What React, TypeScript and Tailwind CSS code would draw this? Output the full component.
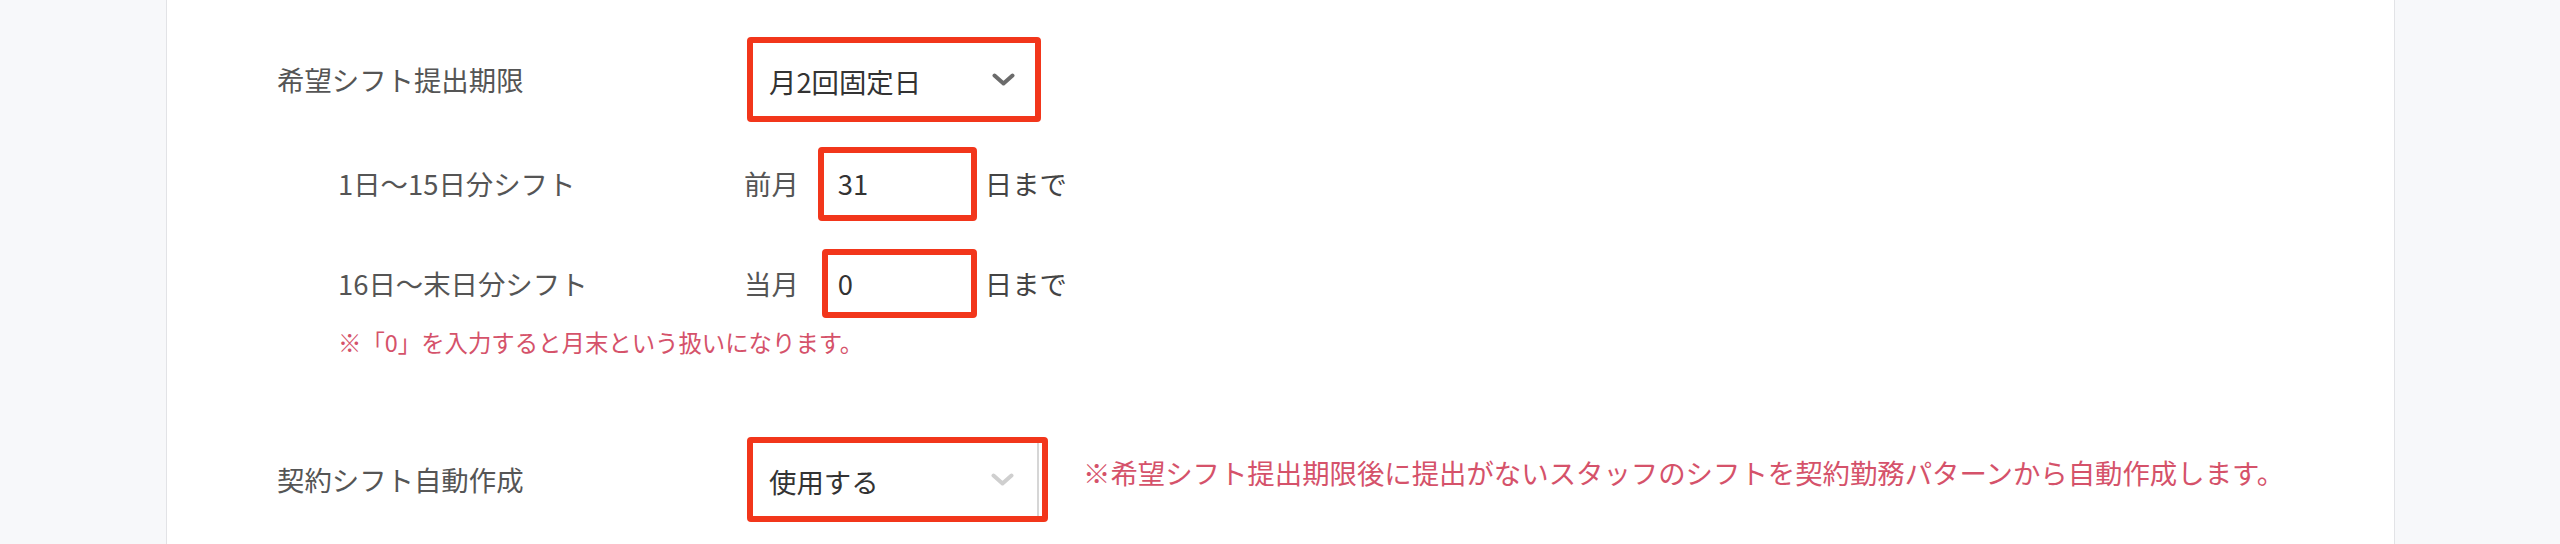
import React from "react";

function Chevron({ light }: { light?: boolean }) {
  return (
    <svg width="23" height="13" viewBox="0 0 23 13" className="shrink-0">
      <path
        d="M2.5 2.5 L11.5 10.5 L20.5 2.5"
        fill="none"
        stroke={light ? "#cfcfcf" : "#6b6b6b"}
        strokeWidth="4"
        strokeLinecap="round"
        strokeLinejoin="round"
      />
    </svg>
  );
}

function Label({ children, sub }: { children: React.ReactNode; sub?: boolean }) {
  return (
    <div className={`w-[467px] shrink-0 text-[27.4px] text-[#555] ${sub ? "pl-[61px]" : ""}`}>
      {children}
    </div>
  );
}

function DayInput({ prefix, value, offset }: { prefix: string; value: string; offset: "a" | "b" }) {
  return (
    <div className="flex items-center text-[27.4px]">
      <span className="text-[#555]">{prefix}</span>
      {offset === "a" ? (
        <div className="ml-[19px] w-[159px] h-[74px] border-[6px] border-[#f2361b] rounded-[4px] flex items-center pl-[14px] text-[#333]">
          {value}
        </div>
      ) : (
        <div className="ml-[23px] w-[155px] h-[69px] border-[6px] border-[#f2361b] rounded-[4px] flex items-center pl-[10px] text-[#333]">
          {value}
        </div>
      )}
      <span className="ml-[8px] text-[#444]">日まで</span>
    </div>
  );
}

export default function App() {
  return (
    <div className="min-h-screen bg-[#f7f8fa] font-['Noto_Sans_CJK_JP','Noto_Sans',sans-serif] leading-normal">
      <div className="ml-[166px] w-[2229px] min-h-[544px] bg-white border-x border-[#e2e3e6] pl-[110px] pt-[37px]">
        {/* 希望シフト提出期限 */}
        <div className="flex items-center h-[85px]">
          <Label>希望シフト提出期限</Label>
          <div className="ml-[3px] w-[294px] h-[85px] border-[6px] border-[#f2361b] rounded-[4px] flex items-center justify-between pl-[16px] pr-[20px]">
            <span className="text-[27.4px] text-[#333] mt-[4px]">月2回固定日</span>
            <Chevron />
          </div>
        </div>

        <div className="flex items-center h-[74px] mt-[25px]">
          <Label sub>1日〜15日分シフト</Label>
          <DayInput prefix="前月" value="31" offset="a" />
        </div>

        <div className="flex items-center h-[69px] mt-[28px]">
          <Label sub>16日〜末日分シフト</Label>
          <DayInput prefix="当月" value="0" offset="b" />
        </div>

        <p className="mt-[6px] pl-[61px] h-[36px] leading-[36px] text-[23.4px] text-[#d5526a]">
          ※「0」を入力すると月末という扱いになります。
        </p>

        {/* 契約シフト自動作成 */}
        <div className="flex items-center h-[85px] mt-[77px]">
          <Label>契約シフト自動作成</Label>
          <div className="ml-[3px] w-[301px] h-[85px] border-[6px] border-[#f2361b] rounded-[4px] flex pr-[3px]">
            <div className="flex-1 flex items-center justify-between pl-[16px] pr-[23px] border-r-2 border-[#d6d6d6]">
              <span className="text-[27.4px] text-[#333] mt-[4px]">使用する</span>
              <Chevron light />
            </div>
          </div>
          <p className="ml-[35px] text-[27.4px] text-[#d5526a] -mt-[14px]">
            ※希望シフト提出期限後に提出がないスタッフのシフトを契約勤務パターンから自動作成します。
          </p>
        </div>
      </div>
    </div>
  );
}
